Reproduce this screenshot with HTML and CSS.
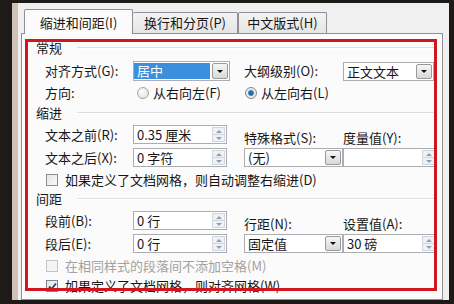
FILE: index.html
```html
<!DOCTYPE html>
<html lang="zh-CN">
<head>
    <meta charset="UTF-8">
    <title>段落</title>
    <link rel="stylesheet" href="styles.css">
</head>
<body>
<div class="screen">
    <div class="dialog">
        <div class="tabs">
            <div class="tab active">缩进和间距(I)</div>
            <div class="tab t2">换行和分页(P)</div>
            <div class="tab t3">中文版式(H)</div>
        </div>

        <div class="panel">
            <div class="group-title"><span>常规</span></div>
            <div class="row">
                <span class="lbl">对齐方式(G):</span>
                <div class="select sel-align"><span class="val"><b class="hl">居中</b></span><span class="arrow"></span></div>
                <span></span>
                <span class="lbl">大纲级别(O):</span>
                <div class="select"><span class="val">正文文本</span><span class="arrow"></span></div>
            </div>
            <div class="row row-dir">
                <span class="lbl">方向:</span>
                <span class="radio r1"><i class="dot"></i>从右向左(F)</span>
                <span></span>
                <span class="radio r2"><i class="dot on"></i>从左向右(L)</span>
            </div>

            <div class="group-title g2"><span>缩进</span></div>
            <div class="grid2">
                <span class="lbl">文本之前(R):</span>
                <div class="spin"><span class="val">0.35 厘米</span><span class="updown"><i class="up"></i><i class="down"></i></span></div>
                <span></span>
                <span class="lbl top">特殊格式(S):</span>
                <span class="lbl top">度量值(Y):</span>

                <span class="lbl">文本之后(X):</span>
                <div class="spin"><span class="val">0 字符</span><span class="updown"><i class="up"></i><i class="down"></i></span></div>
                <span></span>
                <div class="select"><span class="val">(无)</span><span class="arrow"></span></div>
                <div class="spin"><span class="val"></span><span class="updown"><i class="up"></i><i class="down"></i></span></div>
            </div>
            <div class="check"><i class="box"></i>如果定义了文档网格，则自动调整右缩进(D)</div>

            <div class="group-title g3"><span>间距</span></div>
            <div class="grid2">
                <span class="lbl">段前(B):</span>
                <div class="spin"><span class="val">0 行</span><span class="updown"><i class="up"></i><i class="down"></i></span></div>
                <span></span>
                <span class="lbl top">行距(N):</span>
                <span class="lbl top">设置值(A):</span>

                <span class="lbl">段后(E):</span>
                <div class="spin"><span class="val">0 行</span><span class="updown"><i class="up"></i><i class="down"></i></span></div>
                <span></span>
                <div class="select"><span class="val">固定值</span><span class="arrow"></span></div>
                <div class="spin"><span class="val">30 磅</span><span class="updown"><i class="up"></i><i class="down"></i></span></div>
            </div>
            <div class="check disabled"><i class="box"></i>在相同样式的段落间不添加空格(M)</div>
            <div class="check"><i class="box checked"><svg width="9" height="9" viewBox="0 0 9 9"><path d="M1 4.5 L3.5 7 L8 1.5" fill="none" stroke="#23466e" stroke-width="1.8"/></svg></i>如果定义了文档网格，则对齐网格(W)</div>

            <div class="group-title g4"><span>预览</span></div>
        </div>

        <div class="mark"></div>
    </div>
</div>
</body>
</html>
```

FILE: styles.css
```css
* { box-sizing: border-box; }

body {
    margin: 0;
    background: #1d1a18;
    font-family: "Noto Sans CJK SC", "Noto Sans", sans-serif;
    font-size: 13px;
    color: #161616;
}

.screen {
    width: 454px;
    height: 300px;
    padding: 3px 5px 0 12px;
    overflow: hidden;
}

.dialog {
    position: relative;
    height: 100%;
    background: #f0f0f0;
    border-left: 6px solid #cfc2b4;
    padding: 6px 6px 0 3px;
    display: flex;
    flex-direction: column;
}

/* tabs */
.tabs {
    display: flex;
    align-items: flex-end;
    height: 24px;
    padding-left: 3px;
    position: relative;
    z-index: 2;
}
.tab {
    height: 21px;
    line-height: 20px;
    text-align: center;
    border: 1px solid #8e9096;
    border-bottom: none;
    background: linear-gradient(#f3f3f3, #e5e5e5);
    border-radius: 2px 2px 0 0;
}
.tab.active {
    width: 109px;
    height: 25px;
    line-height: 25px;
    margin-bottom: -1px;
    background: #fbfbfb;
}
.tab.t2 { width: 105px; border-left: none; }
.tab.t3 { width: 89px; border-left: 1px solid #8e9096; }

.panel {
    flex: 1;
    background: #fbfbfb;
    border: 1px solid #8e9096;
    padding: 6px 8px 0 14px;
    overflow: hidden;
}

/* group headers */
.group-title {
    display: flex;
    align-items: center;
    height: 16px;
    line-height: 16px;
}
.group-title span { width: 41px; }
.group-title::after {
    content: "";
    flex: 1;
    border-top: 1px solid #d9dfe4;
    border-bottom: 1px solid #fff;
}
.g2 { margin-top: 2px; }
.g3 { margin-top: 1px; }
.g4 { margin-top: 1px; }

/* rows */
.row, .grid2 {
    display: grid;
    grid-template-columns: 88px 97px 14px 99px 91px;
    margin-left: 9px;
    align-items: center;
}
.row { height: 22px; margin-top: 4px; }
.row-dir { height: 21px; margin-top: 0; }
.grid2 {
    grid-template-rows: 23px 23px;
    margin-top: 2px;
}
.lbl { line-height: 16px; white-space: nowrap; }
.lbl.top { align-self: end; }

/* dropdowns */
.select, .spin {
    display: flex;
    height: 19px;
    border: 1px solid #abadb3;
    background: #fff;
}
.spin { width: 94px; }
.sel-align { width: 97px; height: 20px; }
.val {
    flex: 1;
    line-height: 17px;
    padding-left: 3px;
    white-space: nowrap;
    overflow: hidden;
}
.hl {
    display: block;
    font-weight: normal;
    background: #3b8fdc;
    color: #fff;
    margin: 1px 1px 0 -1px;
    padding-left: 3px;
    line-height: 16px;
}
.sel-align .val { padding-left: 1px; }
.arrow {
    width: 16px;
    margin: 1px;
    border: 1px solid #9a9a9a;
    border-radius: 2px;
    background: linear-gradient(#f6f6f6, #d8d8d8);
    display: flex;
    align-items: center;
    justify-content: center;
}
.arrow::after {
    content: "";
    border-left: 3px solid transparent;
    border-right: 3px solid transparent;
    border-top: 3px solid #111;
}

/* spin buttons */
.updown {
    width: 13px;
    margin: 1px;
    display: flex;
    flex-direction: column;
    border: 1px solid #cfd6de;
    background: #eef2f6;
}
.updown i {
    flex: 1;
    display: flex;
    align-items: center;
    justify-content: center;
}
.updown .up { border-bottom: 1px solid #cfd6de; }
.updown .up::after {
    content: "";
    border-left: 3px solid transparent;
    border-right: 3px solid transparent;
    border-bottom: 3px solid #8c9fb3;
}
.updown .down::after {
    content: "";
    border-left: 3px solid transparent;
    border-right: 3px solid transparent;
    border-top: 3px solid #8c9fb3;
}

/* radios */
.radio {
    display: flex;
    align-items: center;
    white-space: nowrap;
    line-height: 16px;
}
.r1 { margin-left: 4px; }
.r2 { margin-left: 1px; }
.dot {
    width: 12px;
    height: 12px;
    border-radius: 50%;
    border: 1px solid #a5a5a5;
    background: radial-gradient(circle at 40% 40%, #fdfdfd, #dcdcdc);
    margin-right: 4px;
    flex: none;
}
.dot.on {
    border-color: #7e8a96;
    background: radial-gradient(circle, #1e5a8e 0, #3d7fb8 2.5px, #e8eef3 3.5px, #dfe3e7 6px);
}

/* checkboxes */
.check {
    display: flex;
    align-items: center;
    height: 20px;
    margin-left: 10px;
    white-space: nowrap;
    line-height: 16px;
}
.box {
    width: 12px;
    height: 12px;
    border: 1px solid #8f8f8f;
    background: linear-gradient(135deg, #e4e4e4, #fafafa);
    margin-right: 7px;
    flex: none;
    display: flex;
    align-items: center;
    justify-content: center;
}
.box.checked { border-color: #7c8897; }
.check.disabled { color: #a2a2a2; }
.check.disabled .box { border-color: #c4c4c4; background: #f4f4f4; }
.grid2 + .check { margin-top: 1px; }

/* red annotation frame over the panel */
.mark {
    position: absolute;
    left: 7px;
    top: 36px;
    width: 412px;
    height: 252px;
    border: 3px solid #d0161e;
    z-index: 3;
}
```
